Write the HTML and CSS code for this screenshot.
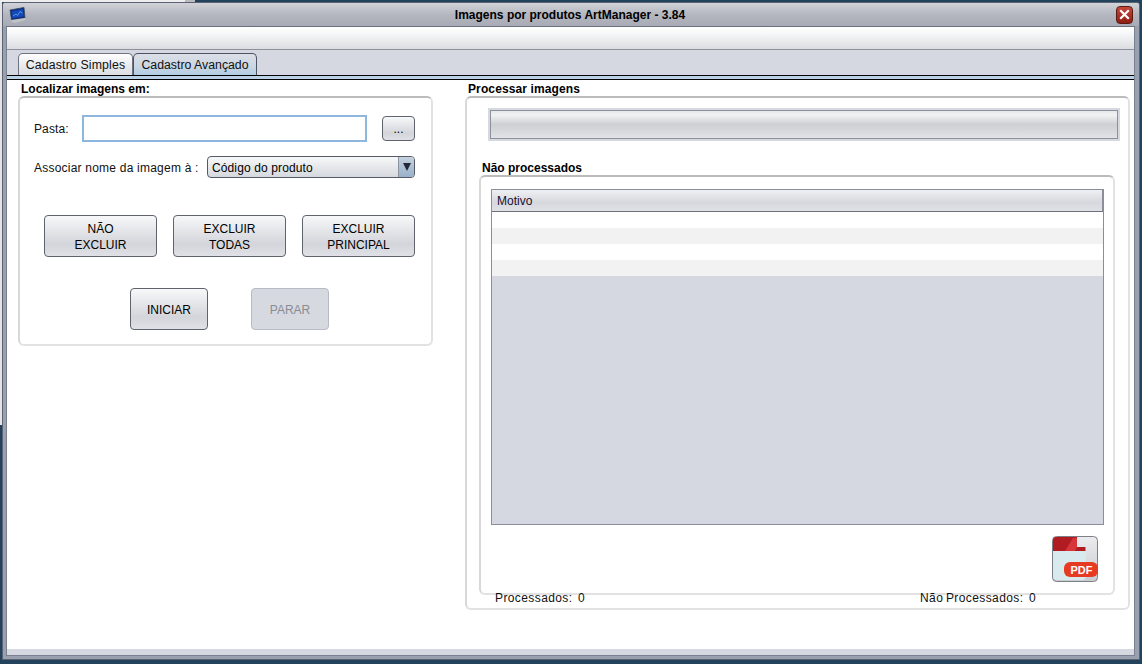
FILE: index.html
```html
<!DOCTYPE html>
<html lang="pt">
<head>
<meta charset="utf-8">
<title>Imagens por produtos ArtManager</title>
<link rel="stylesheet" href="styles.css">
</head>
<body>
<div class="window">
  <header class="titlebar">
    <svg class="app-icon" width="17" height="17" viewBox="0 0 17 17">
      <path d="M1 3 L15 0.5 L16 11 L2.500 13 Z" fill="#0a2a7c" stroke="#3d4a60" stroke-width=".8"/>
      <path d="M2.500 4 L14 2 L14.800 9.500 L3.500 11.300 Z" fill="#1548b8"/>
      <path d="M4 9 L7 7 L8.500 8.500 L11 4.500 L13.500 6" fill="none" stroke="#5fb0f0" stroke-width=".8"/>
      <path d="M2.500 13 L16 11 L16.500 13 L6 16 L2 14.800 Z" fill="#c0c4c8"/>
    </svg>
    <span class="title">Imagens por produtos ArtManager - 3.84</span>
    <button class="close" aria-label="Fechar">
      <svg width="11" height="11" viewBox="0 0 11 11"><path d="M2 2 L9 9 M9 2 L2 9" stroke="#fff" stroke-width="2.200" stroke-linecap="square"/></svg>
    </button>
  </header>
  <div class="client">
    <div class="toolbar"></div>
    <nav class="tabs">
      <div class="tab tab-simple">Cadastro Simples</div>
      <div class="tab tab-active">Cadastro Avançado</div>
    </nav>
    <div class="tab-rule"></div>
    <main class="content">
      <section class="left-col">
        <h2 class="legend legend-left">Localizar imagens em:</h2>
        <div class="panel panel-left">
          <div class="row-pasta">
            <label class="lbl lbl-pasta">Pasta:</label>
            <div class="input"></div>
            <button class="btn btn-dots">...</button>
          </div>
          <div class="row-assoc">
            <label class="lbl lbl-assoc">Associar nome da imagem à :</label>
            <div class="select">
              <span class="select-text">Código do produto</span>
              <span class="select-arrow"><i class="tri"></i></span>
            </div>
          </div>
          <div class="row-actions">
            <button class="btn btn-action">NÃO<br>EXCLUIR</button>
            <button class="btn btn-action">EXCLUIR<br>TODAS</button>
            <button class="btn btn-action">EXCLUIR<br>PRINCIPAL</button>
          </div>
          <div class="row-start">
            <button class="btn btn-run">INICIAR</button>
            <button class="btn btn-run btn-disabled">PARAR</button>
          </div>
        </div>
      </section>
      <section class="right-col">
        <h2 class="legend legend-right">Processar imagens</h2>
        <div class="panel panel-right">
          <div class="progress"><div class="progress-bar"></div></div>
          <h2 class="legend legend-sub">Não processados</h2>
          <div class="panel panel-inner">
            <div class="table">
              <div class="thead"><span class="th">Motivo</span></div>
              <div class="tr"></div>
              <div class="tr tr-alt"></div>
              <div class="tr"></div>
              <div class="tr tr-alt"></div>
            </div>
            <div class="pdf-row">
              <button class="pdf" aria-label="PDF">
                <svg width="46" height="46" viewBox="0 0 46 46">
                  <defs>
                    <linearGradient id="pg" x1="0" y1="0" x2="0" y2="1"><stop offset="0" stop-color="#ececee"/><stop offset="1" stop-color="#c9cbd0"/></linearGradient>
                  </defs>
                  <rect x=".5" y=".5" width="45" height="45" rx="4" fill="url(#pg)" stroke="#7d8088"/>
                  <path d="M1 14 H34 V40 Q34 44 30 44 H5 Q1 44 1 40 Z" fill="#d8eaee"/>
                  <path d="M1 4 Q1 1 4 1 H25 V11 H33.500 V15 H1 Z" fill="#b01c22"/>
                  <path d="M13 15 L21 2 H25 V11 L23 15 Z" fill="#d8353a"/>
                  <rect x="12" y="26" width="34" height="15" rx="6" fill="#e63a22"/>
                  <text x="29.500" y="37.500" class="pdf-text" text-anchor="middle">PDF</text>
                </svg>
              </button>
            </div>
          </div>
          <div class="totals">
            <span class="total total-a">Processados:&nbsp; 0</span>
            <span class="total total-b">Não Processados:&nbsp; 0</span>
          </div>
        </div>
      </section>
    </main>
    <div class="status"></div>
  </div>
</div>
</body>
</html>
```

FILE: styles.css
```css
* { box-sizing: border-box; }
html, body { height: 100%; }
body {
  margin: 0;
  overflow: hidden;
  background:
    linear-gradient(#ededed, #ededed) 0 0 / 185px 2px no-repeat,
    linear-gradient(#b9bbc0, #b9bbc0) 185px 0 / 10px 2px no-repeat,
    linear-gradient(#e4e4e4, #e4e4e4) 0 0 / 2px 425px no-repeat,
    #23435d;
  font-family: "Liberation Sans", Arial, sans-serif;
  font-size: 12px;
  color: #000;
  padding: 2px 2px 3px 2px;
}
button { font-family: inherit; font-size: 12px; color: inherit; padding: 0; }

.window {
  width: 1138px;
  height: 658px;
  border: 1px solid #5b6273;
  border-radius: 3px 3px 0 0;
  background: #99a0ae;
  padding: 0 4px 3px 3px;
  display: flex;
  flex-direction: column;
}
.titlebar {
  margin: 0 -4px 0 -3px;
  height: 23px;
  flex: none;
  background: linear-gradient(#d1d3d8, #b4b7bf 50%, #a8abb5);
  display: flex;
  align-items: center;
  padding: 0 6px 0 6px;
  border-radius: 2px 2px 0 0;
}
.app-icon { flex: none; margin-top: 1px; }
.title {
  flex: 1;
  text-align: center;
  font-weight: bold;
  font-size: 12px;
  padding-right: 2px;
}
.close {
  flex: none;
  width: 17px;
  height: 18px;
  border: 1px solid #5c1a14;
  border-radius: 4px;
  background: linear-gradient(#c5483a, #8f1d12);
  display: flex;
  align-items: center;
  justify-content: center;
}
.client {
  flex: 1;
  background: #fff;
  border: 1px solid #7b8090;
  border-top-color: #6c7180;
  display: flex;
  flex-direction: column;
  min-height: 0;
}
.toolbar {
  height: 23px;
  flex: none;
  background: linear-gradient(#fff, #f6f7f8 30%, #dcdde1);
  border-bottom: 1px solid #8e919b;
}
.tabs {
  height: 25px;
  flex: none;
  padding: 3px 0 0 11px;
  background: #d5d8e1;
  display: flex;
  align-items: stretch;
}
.tab {
  width: 115px;
  border: 1px solid #6e7280;
  border-bottom: 0;
  border-radius: 5px 5px 0 0;
  background: linear-gradient(#fff, #e6e8ec 60%, #dcdee4);
  text-align: center;
  line-height: 23px;
  color: #111;
  font-size: 12.300px;
  overflow: hidden;
}
.tab-simple { letter-spacing: .15px; }
.tab-active {
  width: 124px;
  background: linear-gradient(#dcdfe6, #c9d6e4 60%, #b3cde2);
  border-color: #4c5364;
}
.tab-rule {
  height: 5px;
  flex: none;
  background: #bad1e6;
  border-top: 1px solid #000;
  border-bottom: 1px solid #000;
}
.content {
  flex: 1;
  min-height: 0;
  display: flex;
  align-items: flex-start;
  padding: 3px 0 0 11px;
}
.legend {
  margin: 0;
  font-size: 12px;
  font-weight: bold;
  line-height: 13px;
  white-space: nowrap;
}
.panel {
  background: #fff;
  border: 2px solid #e2e2e2;
  border-top-color: #bcbcbc;
  border-left-color: #d8d8d8;
  border-radius: 6px;
}
.left-col { width: 415px; flex: none; }
.legend-left { padding-left: 3px; }
.panel-left {
  height: 250px;
  padding: 16px 16px 0 14px;
}
.row-pasta { display: flex; align-items: center; height: 28px; }
.lbl { color: #111; white-space: nowrap; padding-top: 2px; }
.lbl-pasta { width: 48px; letter-spacing: .1px; }
.input {
  width: 285px;
  height: 27px;
  border: 2px solid #8fb6dc;
  background: #fff;
}
.btn {
  border: 1px solid #5f636e;
  border-radius: 4px;
  background: linear-gradient(#f7f8f9, #d3d5db 70%, #dfe1e6);
  line-height: 16px;
  padding-top: 2px;
}
.btn-dots { width: 33px; height: 25px; margin-left: 15px; }
.row-assoc { display: flex; align-items: center; height: 23px; margin-top: 13px; }
.lbl-assoc { width: 173px; letter-spacing: .22px; }
.select {
  width: 208px;
  height: 22px;
  border: 1px solid #555a66;
  border-radius: 4px;
  background: linear-gradient(#f7f8f9, #d5d8de);
  display: flex;
  align-items: center;
  overflow: hidden;
}
.select-text { flex: 1; padding: 2px 0 0 4px; letter-spacing: .12px; }
.select-arrow {
  width: 16px;
  height: 100%;
  background: linear-gradient(#c6d2df, #98b1ca);
  border-left: 1px solid #8c92a0;
  display: flex;
  align-items: center;
  justify-content: center;
}
.tri {
  width: 0;
  height: 0;
  border-left: 4.500px solid transparent;
  border-right: 4.500px solid transparent;
  border-top: 8px solid #222a38;
}
.row-actions {
  display: flex;
  gap: 16px;
  margin-top: 37px;
  padding-left: 10px;
}
.btn-action { width: 113px; height: 42px; }
.row-start {
  display: flex;
  gap: 43px;
  margin-top: 31px;
  padding-left: 96px;
}
.btn-run { width: 78px; height: 42px; }
.btn-disabled {
  border-color: #b8bbc4;
  background: #d6d9e0;
  color: #8a8c92;
}
.right-col { margin-left: 32px; width: 665px; flex: none; }
.legend-right { padding-left: 3px; letter-spacing: .12px; }
.panel-right {
  height: 514px;
  padding: 10px 0 0 21px;
  position: relative;
}
.progress {
  width: 632px;
  height: 33px;
  border: 2px solid #d6d9df;
  background: #d6d9df;
}
.progress-bar {
  height: 100%;
  border: 1px solid #8e919c;
  background: linear-gradient(#e6e7ea, #f1f2f3 15%, #cdcfd3 50%, #e2e3e7);
}
.legend-sub { margin: 21px 0 0 -6px; }
.panel-inner {
  width: 636px;
  height: 420px;
  margin: 0 0 0 -9px;
  padding: 12px 0 0 10px;
}
.table {
  width: 613px;
  height: 336px;
  border: 1px solid #8b8e9a;
  background: #d5d8e1;
}
.thead {
  height: 22px;
  background: linear-gradient(#eff0f2, #d6d8de 60%, #dfe1e5);
  border-bottom: 1px solid #6d707c;
  border-right: 1px solid #8b8e9a;
  line-height: 23px;
  padding-left: 5px;
  color: #1a1030;
  overflow: hidden;
}
.tr { height: 16px; background: #fff; }
.tr-alt { background: #f2f2f2; }
.pdf-row {
  display: flex;
  justify-content: flex-end;
  width: 607px;
  margin-top: 11px;
}
.pdf { width: 46px; height: 46px; border: 0; background: none; display: block; }
.pdf svg { display: block; }
.pdf-text { font: bold 11px "Liberation Sans", Arial, sans-serif; fill: #fff; }
.totals {
  position: absolute;
  left: 28px;
  top: 493px;
  width: 580px;
  height: 12px;
  overflow: hidden;
  line-height: 14px;
  letter-spacing: .4px;
  word-spacing: -1px;
}
.total { position: absolute; top: 0; white-space: nowrap; color: #111; }
.total-a { left: 0; }
.total-b { left: 425px; }
.status { height: 6px; flex: none; background: #d5d8e1; }
```
